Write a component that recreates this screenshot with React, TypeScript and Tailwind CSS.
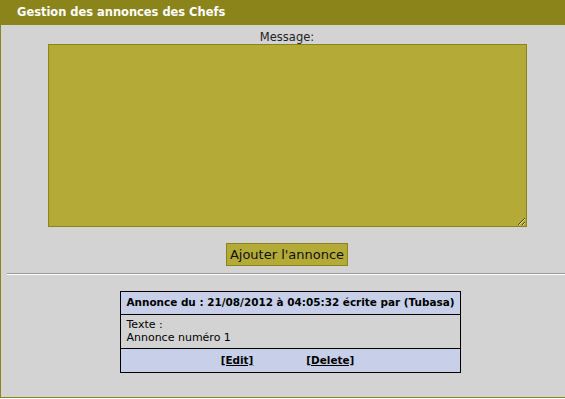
import React from 'react';

export default function App() {
  return (
    <div className="w-[575px] h-[398px] bg-[#d3d3d3] border-l border-b border-[#8b841b] font-['DejaVu_Sans',sans-serif] text-black overflow-hidden">
      <div className="h-[25px] bg-[#8b841b] pl-[16px] flex items-center text-[11.45px] font-bold text-white">
        Gestion des annonces des Chefs
      </div>
      <div className="flex flex-col items-center w-[572px]">
        <div className="mt-[5px] text-[11.5px] leading-[14px] text-[#222]">Message:</div>
        <textarea
          className="block w-[479px] h-[183px] bg-[#b3aa38] border border-[#8b841b] outline-none"
          defaultValue=""
        />
        <button className="mt-[16px] h-[23px] px-[3px] bg-[#b3aa38] border border-[#8b841b] text-[13px] leading-none text-[#111]">
          Ajouter l'annonce
        </button>
      </div>
      <div className="ml-[6px] mt-[7px] border-t border-[#999] border-b-white border-b h-0" />
      <div className="flex w-[572px] justify-center mt-[16px] pl-[7px]">
        <table className="w-[340px] border-collapse text-[11px]">
          <tbody>
            <tr className="bg-[#c7d0e8]">
              <td className="border border-black px-[5px] h-[23px] text-[10.45px] font-bold whitespace-nowrap">
                Annonce du : 21/08/2012 à 04:05:32 écrite par (Tubasa)
              </td>
            </tr>
            <tr>
              <td className="border border-black px-[5px] pt-[3px] pb-[4px] leading-[13px]">
                Texte :<br />Annonce numéro 1
              </td>
            </tr>
            <tr className="bg-[#c7d0e8]">
              <td className="border border-black h-[24px] text-[10.45px] font-bold">
                <div className="flex justify-center gap-[53px] pr-[6px]">
                  <a href="#" className="underline">[Edit]</a>
                  <a href="#" className="underline">[Delete]</a>
                </div>
              </td>
            </tr>
          </tbody>
        </table>
      </div>
    </div>
  );
}
